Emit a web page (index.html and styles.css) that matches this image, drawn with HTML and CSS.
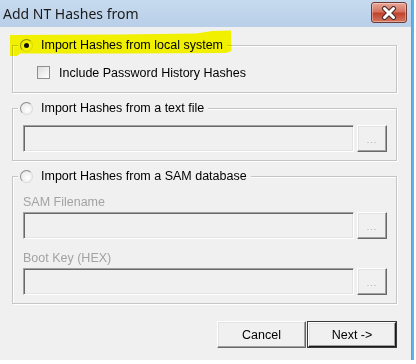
FILE: index.html
```html
<!DOCTYPE html>
<html lang="en">
<head>
  <meta charset="UTF-8">
  <title>Add NT Hashes from</title>
  <link rel="stylesheet" href="styles.css">
</head>
<body>
  <div class="window">
    <div class="titlebar">
      <span class="title">Add NT Hashes from</span>
      <div class="close">
        <svg width="20" height="14" viewBox="0 0 20 14">
          <path d="M5.5 2.5 L14.5 11.5 M14.5 2.5 L5.5 11.5" stroke="#4a2a28" stroke-width="5" stroke-linecap="round"/>
          <path d="M5.5 2.5 L14.5 11.5 M14.5 2.5 L5.5 11.5" stroke="#fff" stroke-width="3" stroke-linecap="round"/>
        </svg>
      </div>
    </div>

    <div class="client">
      <!-- local system -->
      <div class="group group-local">
        <div class="legend"><span class="radio checked"></span><span>Import Hashes from local system</span></div>
        <div class="check-row"><span class="checkbox"></span><span>Include Password History Hashes</span></div>
      </div>

      <!-- text file -->
      <div class="group group-file">
        <div class="legend"><span class="radio"></span><span>Import Hashes from a text file</span></div>
        <div class="field-row">
          <div class="field"></div>
          <div class="browse">...</div>
        </div>
      </div>

      <!-- SAM database -->
      <div class="group group-sam">
        <div class="legend"><span class="radio"></span><span>Import Hashes from a SAM database</span></div>
        <div class="label first">SAM Filename</div>
        <div class="field-row">
          <div class="field"></div>
          <div class="browse">...</div>
        </div>
        <div class="label">Boot Key (HEX)</div>
        <div class="field-row">
          <div class="field"></div>
          <div class="browse">...</div>
        </div>
      </div>

      <div class="actions">
        <div class="btn">Cancel</div>
        <div class="btn btn-default">Next -&gt;</div>
      </div>
    </div>

    <!-- marker highlight on first option -->
    <svg class="highlight" width="240" height="60" viewBox="0 0 240 60">
      <path d="M10 35 L120 34.5 L196 33.5 L212 31 L231 30.5 L231.5 51 L226 53 L120 53.5 L20 53.5 L17 56 L10 56 Z" fill="#ffff00"/>
    </svg>
  </div>
</body>
</html>
```

FILE: styles.css
```css
* {
  box-sizing: border-box;
}

body {
  margin: 0;
  background-color: #fff;
  font-family: 'Liberation Sans', Arial, sans-serif;
  font-size: 12.5px;
  color: #000;
}

.window {
  position: relative;
  width: 411px;
  height: 360px;
  display: flex;
  flex-direction: column;
  background-color: #f0f0f0;
  box-shadow: 1px 0 0 #8a96a3, 3px 0 0 #5ab6ea, 2px 2px 1px rgba(0, 0, 0, 0.65);
}

.titlebar {
  height: 27px;
  flex: none;
  display: flex;
  align-items: center;
  justify-content: space-between;
  padding: 0 4px 0 3px;
  background: linear-gradient(#c7daee, #b8cfe8);
}

.title {
  font-family: 'Noto Sans', sans-serif;
  font-size: 14px;
  color: #1a1a1a;
  margin-top: -1px;
}

.close {
  width: 36px;
  height: 21px;
  margin-top: -2px;
  display: flex;
  align-items: center;
  justify-content: center;
  border: 1px solid #6e3a33;
  border-radius: 3px;
  background: linear-gradient(#e9a99a, #d5735f 45%, #c2432c 55%, #d4765e);
  box-shadow: inset 0 0 0 1px rgba(255, 255, 255, 0.35);
}

.client {
  flex: 1;
  display: flex;
  flex-direction: column;
  padding: 18px 14px 0 12px;
}

.group {
  border: 1px solid #c5c5c5;
  box-shadow: inset 1px 1px #fff, 1px 1px #fff;
  padding: 0 9px 8px 10px;
  display: flex;
  flex-direction: column;
}

.group + .group {
  margin-top: 15px;
}

.legend {
  align-self: flex-start;
  display: flex;
  align-items: center;
  gap: 8px;
  height: 18px;
  margin: -10px 0 0 -5px;
  padding: 0 4px 0 2px;
  background-color: #f0f0f0;
  position: relative;
  z-index: 1;
}

.radio {
  width: 13px;
  height: 13px;
  border-radius: 50%;
  border: 1px solid;
  border-color: #8c8c8c #dadada #dadada #8c8c8c;
  background: radial-gradient(circle at 60% 60%, #fff, #e2e2e2);
  position: relative;
}

.radio.checked::after {
  content: '';
  position: absolute;
  left: 3px;
  top: 3px;
  width: 5px;
  height: 5px;
  border-radius: 50%;
  background-color: #111;
}

.check-row {
  display: flex;
  align-items: center;
  gap: 9px;
  height: 15px;
  margin: 11px 0 4px 14px;
}

.checkbox {
  width: 13px;
  height: 13px;
  border: 1px solid #8e8f8f;
  background: linear-gradient(135deg, #dcdcdc, #fff);
}

.field-row {
  display: flex;
  gap: 3px;
}

.group-file .field-row {
  margin-top: 8px;
}

.field {
  width: 331px;
  height: 27px;
  border: 1px solid;
  border-color: #a0a0a0 #fff #fff #a0a0a0;
  box-shadow: inset 1px 1px #696969, inset -1px -1px #e3e3e3;
  background-color: #f0f0f0;
}

.browse {
  width: 30px;
  height: 27px;
  border: 1px solid;
  border-color: #fff #696969 #696969 #fff;
  box-shadow: inset -1px -1px #a0a0a0, inset 1px 1px #e3e3e3;
  display: flex;
  align-items: center;
  justify-content: center;
  font-size: 9px;
  color: #a8a8a8;
  letter-spacing: 1px;
  padding-top: 3px;
}

.label {
  color: #a3a3a3;
  height: 16px;
  line-height: 16px;
  margin: 11px 0 2px;
}

.label.first {
  margin-top: 9px;
}

.actions {
  display: flex;
  justify-content: flex-end;
  margin-top: 17px;
}

.btn {
  width: 89px;
  height: 27px;
  display: flex;
  align-items: center;
  justify-content: center;
  border: 1px solid;
  border-color: #fff #696969 #696969 #fff;
  box-shadow: inset -1px -1px #a0a0a0, inset 1px 1px #e3e3e3;
}

.btn-default {
  width: 90px;
  border: 2px solid;
  border-color: #fff #1a1a1a #1a1a1a #fff;
  outline: 1px solid #3a3a3a;
  outline-offset: -1px;
  margin-left: 1px;
}

.highlight {
  position: absolute;
  left: 0;
  top: 0;
  mix-blend-mode: multiply;
  pointer-events: none;
  z-index: 2;
}
```
